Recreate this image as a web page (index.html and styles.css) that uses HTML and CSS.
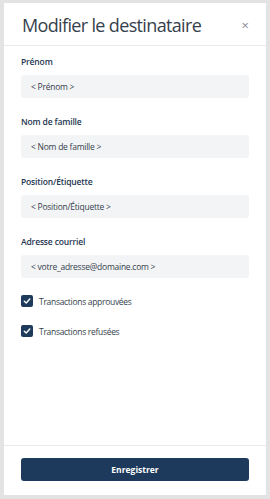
FILE: index.html
```html
<!DOCTYPE html>
<html lang="fr">
<head>
<meta charset="UTF-8">
<title>Modifier le destinataire</title>
<link rel="stylesheet" href="styles.css">
</head>
<body>
<div class="panel">
    <div class="head">
        <h1 class="title">Modifier le destinataire</h1>
        <span class="close">&times;</span>
    </div>
    <div class="form">
        <div class="field">
            <div class="label">Prénom</div>
            <div class="input">&lt; Prénom &gt;</div>
        </div>
        <div class="field">
            <div class="label">Nom de famille</div>
            <div class="input">&lt; Nom de famille &gt;</div>
        </div>
        <div class="field">
            <div class="label">Position/Étiquette</div>
            <div class="input">&lt; Position/Étiquette &gt;</div>
        </div>
        <div class="field">
            <div class="label">Adresse courriel</div>
            <div class="input">&lt; votre_adresse@domaine.com &gt;</div>
        </div>
        <div class="check">
            <span class="box"><svg width="8" height="8" viewBox="0 0 8 8"><path d="M1.3 4.2 L3.2 6 L6.8 2" fill="none" stroke="#fff" stroke-width="1.4" stroke-linecap="round" stroke-linejoin="round"/></svg></span>
            <span class="check-text">Transactions approuvées</span>
        </div>
        <div class="check">
            <span class="box"><svg width="8" height="8" viewBox="0 0 8 8"><path d="M1.3 4.2 L3.2 6 L6.8 2" fill="none" stroke="#fff" stroke-width="1.4" stroke-linecap="round" stroke-linejoin="round"/></svg></span>
            <span class="check-text">Transactions refusées</span>
        </div>
    </div>
    <div class="foot">
        <div class="btn">Enregistrer</div>
    </div>
</div>
</body>
</html>
```

FILE: styles.css
```css
*{
    margin:0;
    padding:0;
    box-sizing:border-box;
}
body{
    width:270px;
    height:499px;
    background:#e3e3e3;
    padding:3px 4px 4px 4px;
    font-family:"Open Sans","Noto Sans",sans-serif;
}
.panel{
    background:#fff;
    height:492px;
    display:flex;
    flex-direction:column;
}
.head{
    height:43px;
    border-bottom:1px solid #e8e9eb;
    display:flex;
    align-items:center;
    justify-content:space-between;
    padding:0 17px 0 18px;
}
.title{
    font-size:18px;
    font-weight:500;
    color:#363f4c;
    letter-spacing:-0.65px;
    margin-top:1px;
}
.close{
    font-size:13px;
    color:#8a8f96;
    margin-top:2px;
}
.form{
    flex:1;
    padding:9px 17px 0 17px;
}
.field{
    margin-bottom:17px;
}
.label{
    font-size:8.5px;
    font-weight:600;
    color:#253650;
    line-height:14px;
    margin-bottom:6px;
    letter-spacing:-0.15px;
}
.input{
    height:23px;
    background:#f3f4f6;
    border-radius:3px;
    font-size:8.5px;
    color:#353f4d;
    line-height:23px;
    padding-left:10px;
    letter-spacing:-0.25px;
}
.check{
    display:flex;
    align-items:center;
    height:12px;
    margin-bottom:18px;
}
.box{
    width:12px;
    height:12px;
    border-radius:2px;
    background:#1f3b5c;
    display:flex;
    align-items:center;
    justify-content:center;
    margin-right:6px;
}
.check-text{
    font-size:8.5px;
    font-weight:500;
    color:#353f4d;
    letter-spacing:-0.3px;
}
.foot{
    border-top:1px solid #e8e9eb;
    padding:12px 17px 14px 17px;
}
.btn{
    height:23px;
    background:#1d3a5c;
    border-radius:3px;
    color:#fff;
    font-size:8.5px;
    font-weight:700;
    text-align:center;
    line-height:23px;
}
```
